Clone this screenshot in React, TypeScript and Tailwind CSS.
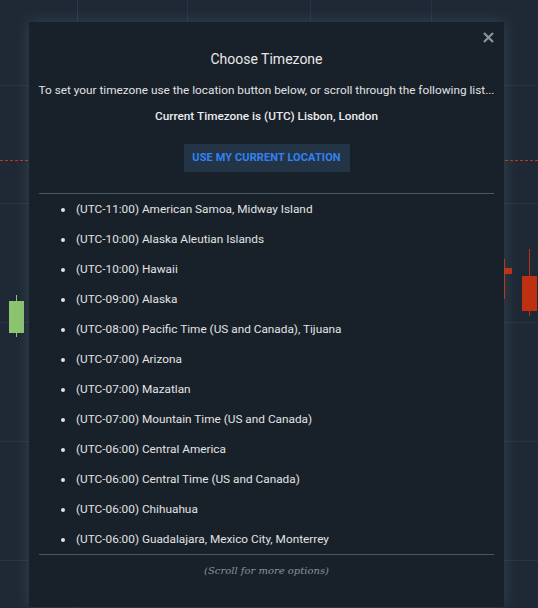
const zones = [
    "(UTC-11:00) American Samoa, Midway Island",
    "(UTC-10:00) Alaska Aleutian Islands",
    "(UTC-10:00) Hawaii",
    "(UTC-09:00) Alaska",
    "(UTC-08:00) Pacific Time (US and Canada), Tijuana",
    "(UTC-07:00) Arizona",
    "(UTC-07:00) Mazatlan",
    "(UTC-07:00) Mountain Time (US and Canada)",
    "(UTC-06:00) Central America",
    "(UTC-06:00) Central Time (US and Canada)",
    "(UTC-06:00) Chihuahua",
    "(UTC-06:00) Guadalajara, Mexico City, Monterrey",
]

// chart behind the dialog: grid drawn with gradients, candles placed on the canvas
function ChartBackdrop() {
    return (
        <div className="absolute inset-0 overflow-hidden bg-[#1e2935] bg-[linear-gradient(to_right,transparent_77px,#283b4e_77px,#283b4e_78px,transparent_78px,transparent_187px,#273542_187px,#273542_188px,transparent_188px,transparent_310px,#273542_310px,#273542_311px,transparent_311px,transparent_431px,#273542_431px,#273542_432px,transparent_432px),linear-gradient(to_bottom,transparent_85px,#273542_85px,#273542_86px,transparent_86px,transparent_203px,#273542_203px,#273542_204px,transparent_204px,transparent_322px,#273542_322px,#273542_323px,transparent_323px,transparent_441px,#273542_441px,#273542_442px,transparent_442px,transparent_560px,#273542_560px,#273542_561px,transparent_561px)]">
            <div className="absolute left-0 right-0 top-[160px] border-t border-dashed border-[#c0341a]" />
            <div className="absolute left-[16px] top-[295px] h-[42px] w-px bg-[#8cc56f]" />
            <div className="absolute left-[9px] top-[301px] h-[32px] w-[15px] bg-[#8cc56f]" />
            <div className="absolute left-[504px] top-[259px] h-[40px] w-px bg-[#bf3011]" />
            <div className="absolute left-[504px] top-[268px] h-[6px] w-[8px] bg-[#bf3011]" />
            <div className="absolute left-[529px] top-[249px] h-[67px] w-px bg-[#bf3011]" />
            <div className="absolute left-[522px] top-[276px] h-[35px] w-[15px] bg-[#bf3011]" />
        </div>
    )
}

export default function App() {
    return (
        <div className="relative h-[608px] w-[538px] overflow-hidden font-['Roboto',sans-serif]">
            <ChartBackdrop />
            <div className="relative ml-[29px] mt-[22px] flex h-[585px] w-[475px] flex-col bg-[#18202a] px-[10px] shadow-[0_0_14px_rgba(110,130,150,0.3)]">
                <button className="absolute right-[10px] top-[10px] text-[#8a949e]">
                    <svg width="11" height="11" viewBox="0 0 11 11" stroke="currentColor" strokeWidth="2.2">
                        <path d="M1 1L10 10M10 1L1 10" />
                    </svg>
                </button>
                <h2 className="mt-[28px] text-center text-[14px] leading-[18px] text-[#e8e8e8]">Choose Timezone</h2>
                <p className="-mx-[10px] mt-[14px] whitespace-nowrap text-center text-[11.8px] leading-[16px] text-[#e2e2e2]">
                    To set your timezone use the location button below, or scroll through the following list...
                </p>
                <p className="mt-[10px] text-center text-[11.8px] font-medium leading-[16px] text-[#ececec]">
                    Current Timezone is (UTC) Lisbon, London
                </p>
                <div className="mt-[20px] flex justify-center">
                    <button className="h-[28px] w-[166px] bg-[#243447] text-[11px] font-bold tracking-[0.1px] text-[#3182f0]">
                        USE MY CURRENT LOCATION
                    </button>
                </div>
                <div className="mt-[21px] h-px bg-[#4b5661]" />
                <ul className="pt-[1px]">
                    {zones.map((z) => (
                        <li key={z} className="flex h-[30px] items-center text-[11.8px] text-[#e2e2e2]">
                            <span className="ml-[22px] mr-[11px] h-[4px] w-[4px] rounded-full bg-[#e2e2e2]" />
                            {z}
                        </li>
                    ))}
                </ul>
                <div className="-mt-px h-px bg-[#4b5661]" />
                <p className="mt-[8px] text-center font-['DejaVu_Serif',serif] text-[10px] italic text-[#8a939c]">
                    (Scroll for more options)
                </p>
            </div>
        </div>
    )
}
